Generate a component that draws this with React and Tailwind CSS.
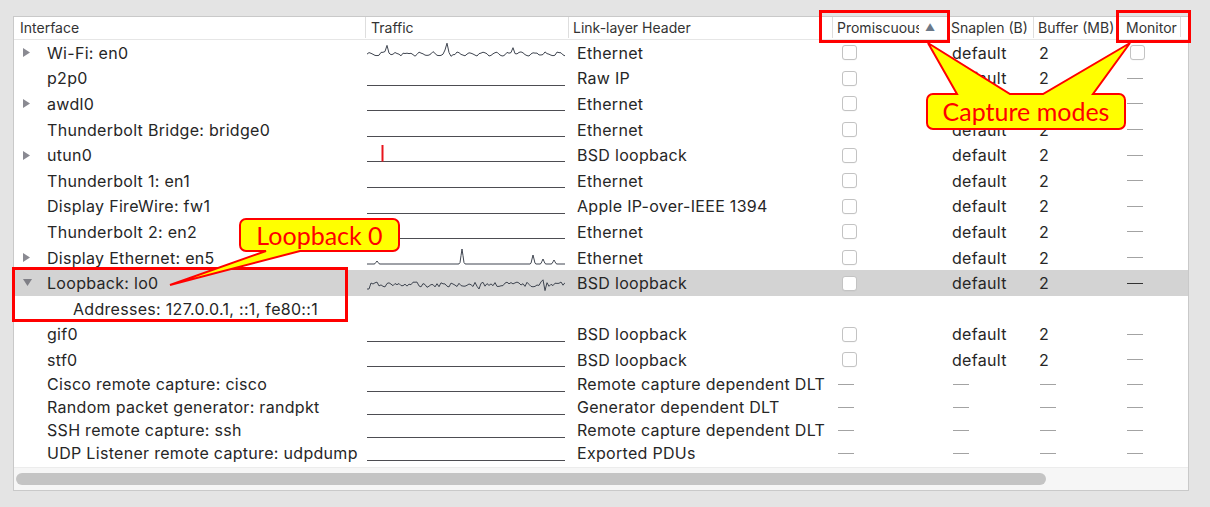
import React from 'react';

// column widths, left to right (px)
const COLS = {
    iface: 'w-[351px]',
    traffic: 'w-[203px]',
    link: 'w-[264px]',
    promisc: 'w-[115px]',
    snap: 'w-[86px]',
    buf: 'w-[85px]',
    mon: 'w-[62px]',
};

const makeRand = (seed) => {
    let s = seed;
    return () => {
        s = (s * 9301 + 49297) % 233280;
        return s / 233280;
    };
};

const toPath = (pts) => pts.map((p, i) => `${i ? 'L' : 'M'}${p[0].toFixed(1)} ${p[1].toFixed(1)}`).join(' ');

const spikeAt = (x, spikes, w = 1.6) =>
    spikes.reduce((acc, [c, h]) => acc + h * Math.exp(-(((x - c) / w) ** 2)), 0);

const buildSpark = (kind) => {
    const pts = [];
    if (kind === 'wifi') {
        const r = makeRand(7);
        for (let x = 0; x <= 198; x += 2) {
            const y = 15 - 1.6 * Math.sin(x * 0.5) - r() * 1.8 - spikeAt(x, [[20, 10], [80, 10], [146, 7], [36, 2], [112, 2], [170, 1.5]]);
            pts.push([x, y]);
        }
    } else if (kind === 'eth') {
        for (let x = 0; x <= 198; x += 1) {
            const y = 19 - spikeAt(x, [[10, 3], [95, 15], [166, 9], [176, 5], [187, 4]], 1.3);
            pts.push([x, y]);
        }
    } else if (kind === 'lo') {
        const r = makeRand(31);
        for (let x = 0; x <= 198; x += 2) {
            let y = 14.5 + (r() - 0.5) * 5 - spikeAt(x, [[175, 8]], 1.4) + spikeAt(x, [[178, 5], [112, 3], [60, 2]], 1.2);
            if (x < 4) y = 19;
            pts.push([x, y]);
        }
    }
    return toPath(pts);
};

const SPARKS = { wifi: buildSpark('wifi'), eth: buildSpark('eth'), lo: buildSpark('lo') };

const Traffic = ({ kind = 'flat' }) => (
    <svg width="198" height="25" viewBox="0 0 198 25" className="ml-[2px] block">
        {kind === 'flat' || kind === 'utun' ? (
            <line x1="0" y1="19.5" x2="198" y2="19.5" stroke="#4d4d52" strokeWidth="1" />
        ) : (
            <path d={SPARKS[kind]} fill="none" stroke="#3f4550" strokeWidth="1" strokeLinejoin="round" />
        )}
        {kind === 'utun' && <line x1="15.5" y1="3" x2="15.5" y2="19.5" stroke="#e8141c" strokeWidth="2" />}
    </svg>
);

const Checkbox = () => (
    <div className="w-[15px] h-[15px] rounded-[3px] border border-[#c3c3c3] bg-white shadow-[0_0.5px_0_rgba(0,0,0,0.05)]" />
);

const Dash = ({ dark }) => <div className={`w-[16px] h-[1px] ${dark ? 'bg-[#333]' : 'bg-[#a3a3a3]'}`} />;

const Tri = ({ dir }) =>
    dir === 'down' ? (
        <svg width="9" height="8" viewBox="0 0 9 8"><path d="M0 0 H9 L4.5 7 Z" fill="#7f7f86" /></svg>
    ) : (
        <svg width="8" height="9" viewBox="0 0 8 9"><path d="M0 0 L7 4.5 L0 9 Z" fill="#8a8a92" /></svg>
    );

const rows = [
    { name: 'Wi-Fi: en0', tri: 'right', traffic: 'wifi', link: 'Ethernet', mon: 'box' },
    { name: 'p2p0', link: 'Raw IP' },
    { name: 'awdl0', tri: 'right', link: 'Ethernet' },
    { name: 'Thunderbolt Bridge: bridge0', link: 'Ethernet' },
    { name: 'utun0', tri: 'right', traffic: 'utun', link: 'BSD loopback' },
    { name: 'Thunderbolt 1: en1', link: 'Ethernet' },
    { name: 'Display FireWire: fw1', link: 'Apple IP-over-IEEE 1394' },
    { name: 'Thunderbolt 2: en2', link: 'Ethernet' },
    { name: 'Display Ethernet: en5', tri: 'right', traffic: 'eth', link: 'Ethernet' },
    { name: 'Loopback: lo0', tri: 'down', traffic: 'lo', link: 'BSD loopback', selected: true },
    { address: 'Addresses: 127.0.0.1, ::1, fe80::1' },
    { name: 'gif0', link: 'BSD loopback' },
    { name: 'stf0', link: 'BSD loopback' },
];

const extcap = [
    { name: 'Cisco remote capture: cisco', link: 'Remote capture dependent DLT' },
    { name: 'Random packet generator: randpkt', link: 'Generator dependent DLT' },
    { name: 'SSH remote capture: ssh', link: 'Remote capture dependent DLT' },
    { name: 'UDP Listener remote capture: udpdump', link: 'Exported PDUs' },
];

const InterfaceRow = ({ row }) => {
    if (row.address) {
        return (
            <div className="h-[25.6px] flex items-center">
                <div className="pl-[59px] whitespace-nowrap">{row.address}</div>
            </div>
        );
    }
    return (
        <div className={`h-[25.6px] flex items-center ${row.selected ? 'bg-[#d3d3d3]' : ''}`}>
            <div className={`${COLS.iface} shrink-0 flex items-center`}>
                <div className="w-[33px] pl-[9px] flex items-center">{row.tri && <Tri dir={row.tri} />}</div>
                <span className="whitespace-nowrap">{row.name}</span>
            </div>
            <div className={`${COLS.traffic} shrink-0 self-stretch`}>
                <Traffic kind={row.traffic} />
            </div>
            <div className={`${COLS.link} shrink-0 pl-[9px] whitespace-nowrap`}>{row.link}</div>
            <div className={`${COLS.promisc} shrink-0 pl-[10px]`}>
                <Checkbox />
            </div>
            <div className={`${COLS.snap} shrink-0 pl-[5px]`}>default</div>
            <div className={`${COLS.buf} shrink-0 pl-[6px]`}>2</div>
            <div className={`${COLS.mon} shrink-0 pl-[9px]`}>
                {row.mon === 'box' ? <div className="pl-[3px]"><Checkbox /></div> : <Dash dark={row.selected} />}
            </div>
        </div>
    );
};

const ExtcapRow = ({ row }) => (
    <div className="h-[23px] flex items-center">
        <div className={`${COLS.iface} shrink-0 pl-[33px] whitespace-nowrap`}>{row.name}</div>
        <div className={`${COLS.traffic} shrink-0 self-stretch`}>
            <svg width="198" height="23" viewBox="0 0 198 23" className="ml-[2px] block">
                <line x1="0" y1="18.5" x2="198" y2="18.5" stroke="#4d4d52" strokeWidth="1" />
            </svg>
        </div>
        <div className={`${COLS.link} shrink-0 pl-[9px] whitespace-nowrap`}>{row.link}</div>
        <div className={`${COLS.promisc} shrink-0 pl-[6px]`}><Dash /></div>
        <div className={`${COLS.snap} shrink-0 pl-[6px]`}><Dash /></div>
        <div className={`${COLS.buf} shrink-0 pl-[7px]`}><Dash /></div>
        <div className={`${COLS.mon} shrink-0 pl-[9px]`}><Dash /></div>
    </div>
);

const App = () => {
    return (
        <div className="w-[1210px] h-[507px] bg-[#e4e4e4] relative overflow-hidden font-['Inter',sans-serif] text-[16px] tracking-[0.3px] text-[#262626]">
            <div className="pt-[16px] pl-[13px]">
                {/* Table panel */}
                <div className="w-[1176px] h-[475px] bg-white border border-[#c9c9c9] flex flex-col">
                    {/* Header */}
                    <div className="h-[23px] shrink-0 flex items-center pb-[2px] border-b border-[#e6e6e6] text-[14px] tracking-normal text-[#333]">
                        <div className={`${COLS.iface} shrink-0 pl-[6px]`}>Interface</div>
                        <div className={`${COLS.traffic} shrink-0 pl-[5px] border-l border-[#dedede]`}>Traffic</div>
                        <div className={`${COLS.link} shrink-0 pl-[4px] border-l border-[#dedede]`}>Link-layer Header</div>
                        <div className={`${COLS.promisc} shrink-0 pl-[4px] border-l border-[#dedede] flex items-center`}>
                            <span className="w-[82px] overflow-hidden whitespace-nowrap">Promiscuous</span>
                            <span className="ml-[6px] text-[10px] text-[#6b7888]">▲</span>
                        </div>
                        <div className={`${COLS.snap} shrink-0 pl-[3px] border-l border-[#dedede] whitespace-nowrap overflow-hidden`}>Snaplen (B)</div>
                        <div className={`${COLS.buf} shrink-0 pl-[4px] border-l border-[#dedede] whitespace-nowrap overflow-hidden`}>Buffer (MB)</div>
                        <div className={`${COLS.mon} shrink-0 pl-[7px] border-l border-[#dedede] whitespace-nowrap`}>Monitor</div>
                        <div className="flex-1 h-full border-l border-[#dedede]" />
                    </div>

                    {/* Rows */}
                    <div>
                        {rows.map((row, i) => (
                            <InterfaceRow key={i} row={row} />
                        ))}
                        {extcap.map((row, i) => (
                            <ExtcapRow key={i} row={row} />
                        ))}
                    </div>

                    <div className="flex-1" />

                    {/* Horizontal scrollbar */}
                    <div className="h-[23px] shrink-0 bg-[#f6f6f6] border-t border-[#ececec] flex items-center pl-[2px]">
                        <div className="w-[1030px] h-[12px] rounded-full bg-[#c4c4c4]" />
                    </div>
                </div>
            </div>

            {/* Annotations */}
            <div className="absolute left-[819px] top-[10px] w-[131px] h-[33px] border-[3px] border-[#ff0000]" />
            <div className="absolute left-[1116px] top-[10px] w-[75px] h-[33px] border-[3px] border-[#ff0000]" />
            <div className="absolute left-[12px] top-[267px] w-[336px] h-[55px] border-[3px] border-[#ff0000]" />

            <svg className="absolute left-0 top-0 pointer-events-none" width="1210" height="507" viewBox="0 0 1210 507">
                <path
                    d="M933 94 H957 L928 43 L1010 94 H1043 L1130 43 L1093 94 H1119 A6 6 0 0 1 1125 100 V123 A6 6 0 0 1 1119 129 H933 A6 6 0 0 1 927 123 V100 A6 6 0 0 1 933 94 Z"
                    fill="#ffff00"
                    stroke="#ff0000"
                    strokeWidth="2"
                    strokeLinejoin="miter"
                />
                <path
                    d="M246 219 H393 A6 6 0 0 1 399 225 V245 A6 6 0 0 1 393 251 H300 L170 285 L266 251 H246 A6 6 0 0 1 240 245 V225 A6 6 0 0 1 246 219 Z"
                    fill="#ffff00"
                    stroke="#ff0000"
                    strokeWidth="2"
                />
            </svg>
            <div className="absolute left-[927px] top-[94px] w-[198px] h-[35px] flex items-center justify-center font-['Lato',sans-serif] text-[25px] tracking-normal text-[#ff0000] leading-none">
                Capture modes
            </div>
            <div className="absolute left-[240px] top-[219px] w-[159px] h-[32px] flex items-center justify-center font-['Lato',sans-serif] text-[25px] tracking-normal text-[#ff0000] leading-none">
                Loopback 0
            </div>
        </div>
    );
};

export default App;
